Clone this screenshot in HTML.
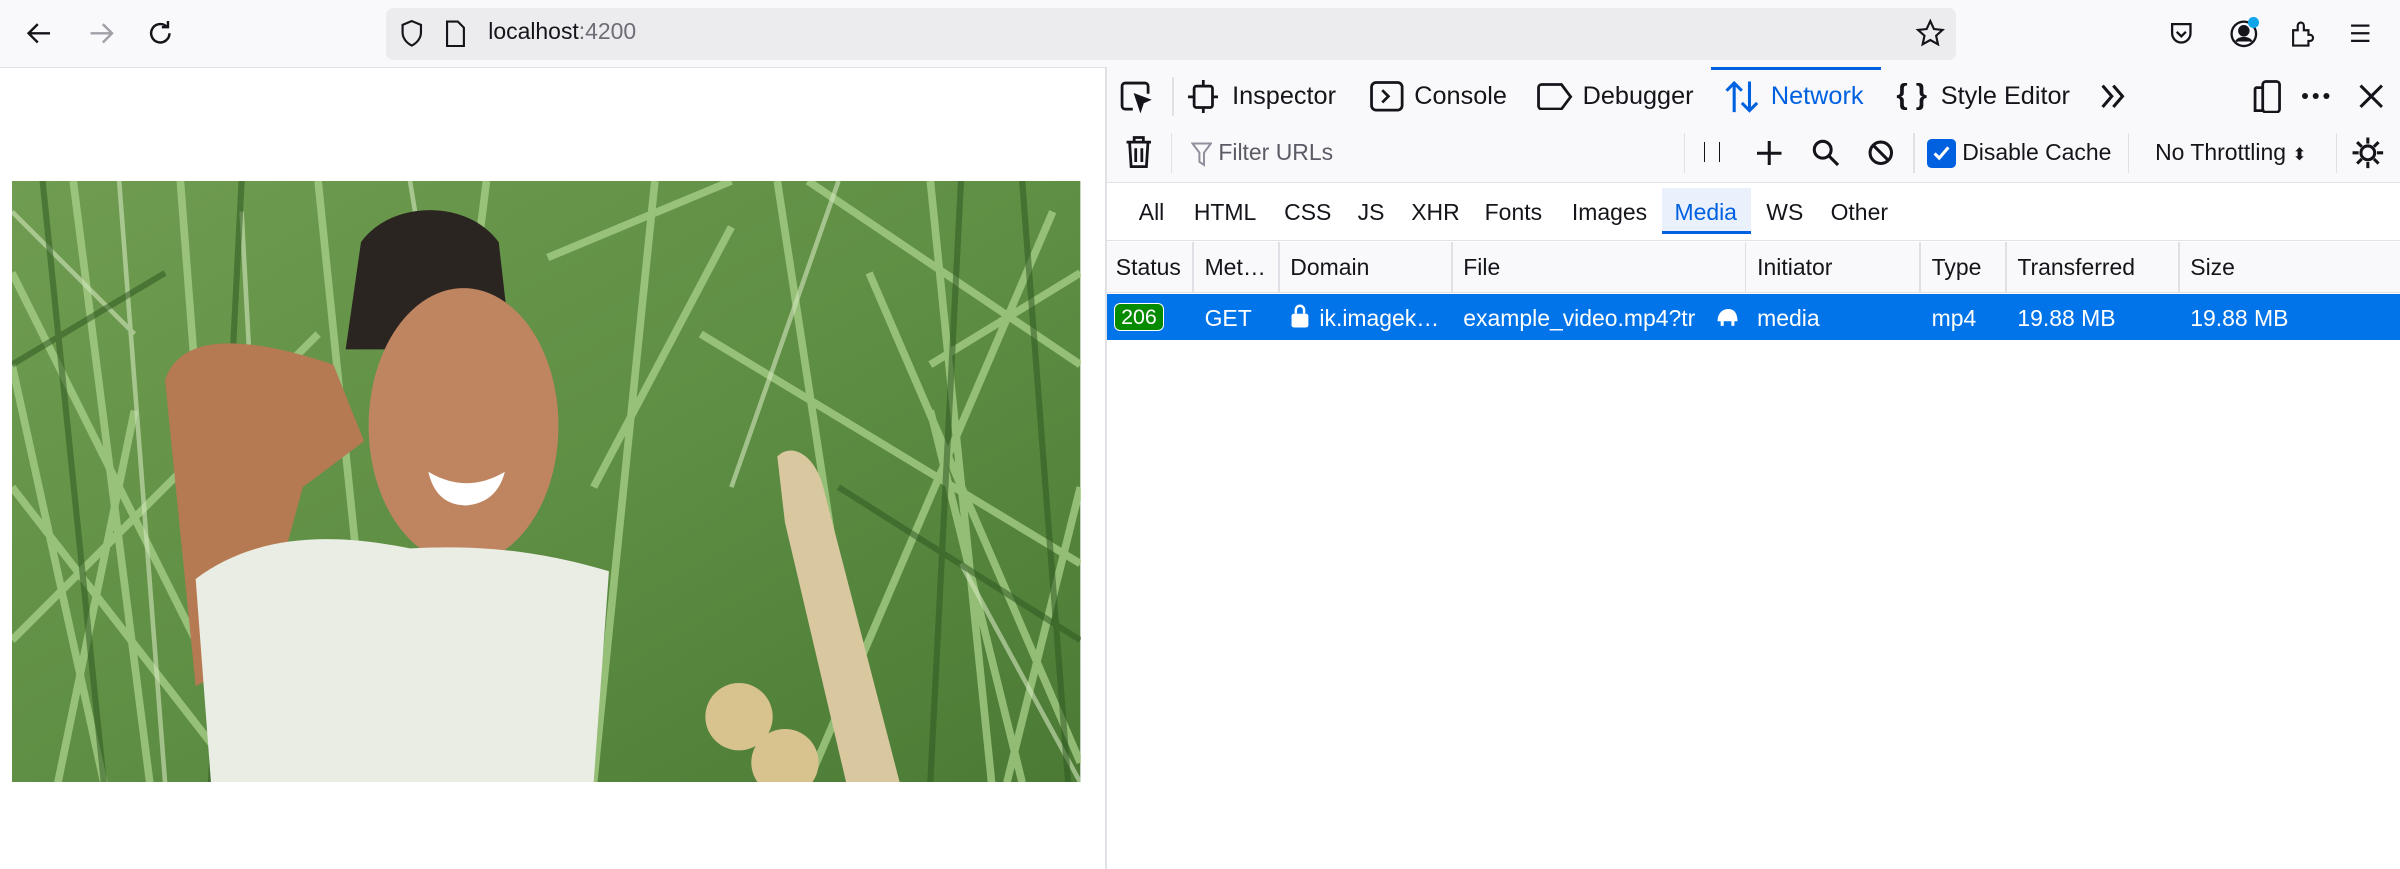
<!DOCTYPE html>
<html><head><meta charset="utf-8"><style>
html,body{margin:0;padding:0;background:#fff;overflow:hidden}
#w{zoom:1.5306;width:1568px;height:568px;position:relative;font-family:"Liberation Sans",sans-serif;color:#15141a}
.a{position:absolute}
svg{display:block}
.t{font-size:16.5px;position:absolute;top:0;height:38px;line-height:38px;white-space:nowrap}
</style></head><body><div id="w">
<div class="a" style="left:0;top:0;width:1568px;height:44px;background:#f9f9fb;border-bottom:1px solid #e0e0e6"></div>
<svg class="a" style="left:16px;top:12px" width="20" height="20" viewBox="0 0 20 20" fill="none" stroke="#15141a" stroke-width="1.6"><path d="M17 10H3M9 4L3 10l6 6"/></svg>
<svg class="a" style="left:56px;top:12px" width="20" height="20" viewBox="0 0 20 20" fill="none" stroke="#a0a0a8" stroke-width="1.6"><path d="M3 10h14M11 4l6 6-6 6"/></svg>
<svg class="a" style="left:95px;top:12px" width="20" height="20" viewBox="0 0 20 20" fill="none" stroke="#15141a" stroke-width="1.6"><path d="M16 10a6 6 0 1 1-2-4.5M15 2v4h-4"/></svg>
<div class="a" style="left:252px;top:5px;width:1026px;height:34px;background:#ececef;border-radius:5px"></div>
<svg class="a" style="left:260px;top:12px" width="18" height="20" viewBox="0 0 18 20" fill="none" stroke="#15141a" stroke-width="1.4"><path d="M9 2l6 2.5v5c0 4-3 7-6 8.5C6 16.5 3 13.5 3 9.5v-5z"/></svg>
<svg class="a" style="left:290px;top:13px" width="14" height="18" viewBox="0 0 14 18" fill="none" stroke="#15141a" stroke-width="1.4"><path d="M2 1h7l4 4v12H2z"/></svg>
<div class="a" style="left:319px;top:12px;font-size:15px">localhost<span style="color:#6d6d75">:4200</span></div>
<svg class="a" style="left:1251px;top:12px" width="20" height="20" viewBox="0 0 20 20" fill="none" stroke="#15141a" stroke-width="1.4"><path d="M10 2l2.4 5.2 5.6.6-4.2 3.8 1.2 5.6L10 14.4 5 17.2l1.2-5.6L2 7.8l5.6-.6z"/></svg>
<svg class="a" style="left:1415px;top:12px" width="20" height="20" viewBox="0 0 20 20" fill="none" stroke="#15141a" stroke-width="1.5"><path d="M4 4h12v6a6 6 0 0 1-12 0z M7 9l3 3 3-3"/></svg>
<svg class="a" style="left:1455px;top:11px" width="22" height="22" viewBox="0 0 22 22" fill="none" stroke="#15141a" stroke-width="1.5"><circle cx="11" cy="11" r="8"/><circle cx="11" cy="9" r="3" fill="#15141a"/><path d="M6 16c2-3 8-3 10 0" fill="#15141a"/></svg>
<div class="a" style="left:1469px;top:11px;width:7px;height:7px;border-radius:50%;background:#0ea5e9"></div>
<svg class="a" style="left:1494px;top:12px" width="20" height="20" viewBox="0 0 20 20" fill="none" stroke="#15141a" stroke-width="1.4"><path d="M4 18V8h3V5a2 2 0 0 1 4 0v3h3v3h1a2 2 0 0 1 0 4h-1v3z"/></svg>
<svg class="a" style="left:1534px;top:14px" width="16" height="16" viewBox="0 0 16 16" stroke="#15141a" stroke-width="1.5"><path d="M2 3h12M2 8h12M2 13h12"/></svg>

<svg class="a" style="left:8px;top:118px" width="698" height="393" viewBox="0 0 698 393">
<defs><linearGradient id="g" x1="0" y1="0" x2="1" y2="1"><stop offset="0" stop-color="#6f9c50"/><stop offset=".5" stop-color="#5f8f44"/><stop offset="1" stop-color="#4b7a35"/></linearGradient></defs>
<rect width="698" height="393" fill="url(#g)"/>
<g stroke="#a9d08a" stroke-width="5" opacity=".75" fill="none">
<path d="M0 60L120 300M40 0L90 393M200 0L240 393M310 0L260 393M420 0L380 393M500 0L560 393M600 0L640 393M680 20L520 393M0 300L200 100M450 100L698 250M520 0L698 120M0 200L150 393M650 393L698 200M350 50L470 0M560 60L698 380M110 0L140 393M30 393L80 150M380 200L470 30M600 120L698 60M0 120L60 393M660 393L600 150M230 393L180 250"/></g>
<g stroke="#d2e6bd" stroke-width="3" opacity=".6" fill="none"><path d="M70 0L100 393M260 0L290 180M540 0L470 200M620 250L698 393M0 20L80 100M150 20L170 393"/></g>
<g stroke="#2f5a22" stroke-width="4" opacity=".55" fill="none"><path d="M20 0L60 393M150 0L130 393M620 0L600 393M660 0L690 393M540 200L698 300M0 120L100 60"/></g>
<path d="M100 130c10-30 50-30 110-10l20 50-40 30-30 110-40 20z" fill="#b57a52"/>
<path d="M228 40c20-28 70-28 90 0l8 70-108 0z" fill="#2b2522"/>
<ellipse cx="295" cy="160" rx="62" ry="90" fill="#bf8560"/>
<path d="M272 190q25 15 50 0q-5 20-25 22q-20 0-25-22z" fill="#fff"/>
<path d="M120 260c40-30 90-30 140-20c40-2 80 0 130 15l-10 138H130z" fill="#eaede4"/>
<path d="M500 180c10-10 25 0 30 20l50 193h-35l-40-170z" fill="#d9c7a0"/>
<circle cx="475" cy="350" r="22" fill="#d8c28e"/><circle cx="505" cy="380" r="22" fill="#d8c28e"/>
</svg>

<div class="a" style="left:722px;top:44px;width:1px;height:524px;background:#e0e0e6"></div>
<div class="a" style="left:723px;top:44px;width:845px;height:38px;background:#f9f9fb;border-bottom:1px solid #e0e0e6"></div>
<div class="a" style="left:1118px;top:44px;width:111px;height:2px;background:#0061e0"></div>
<svg class="a" style="left:731px;top:52px" width="22" height="22" viewBox="0 0 22 22" fill="none" stroke="#15141a" stroke-width="1.8"><path d="M9 19H4a2 2 0 0 1-2-2V4a2 2 0 0 1 2-2h13a2 2 0 0 1 2 2v5"/><path d="M11 10l8 3-3.5 1.5L14 19z" fill="#15141a"/></svg>
<div class="a" style="left:766px;top:50px;width:1px;height:26px;background:#e0e0e6"></div>
<svg class="a" style="left:776px;top:52px" width="20" height="22" viewBox="0 0 20 22" fill="none" stroke="#15141a" stroke-width="1.8"><rect x="4" y="4" width="12" height="14" rx="1.5"/><path d="M10 0v4M10 18v4M0 11h4M16 11h4"/></svg>
<div class="t" style="left:805px;top:44px">Inspector</div>
<svg class="a" style="left:895px;top:53px" width="22" height="20" viewBox="0 0 22 20" fill="none" stroke="#15141a" stroke-width="1.8"><rect x="1" y="1" width="20" height="18" rx="3"/><path d="M8 6l4 4-4 4"/></svg>
<div class="t" style="left:924px;top:44px">Console</div>
<svg class="a" style="left:1004px;top:54px" width="24" height="18" viewBox="0 0 24 18" fill="none" stroke="#15141a" stroke-width="1.8"><path d="M3 1h13l6 8-6 8H3a2 2 0 0 1-2-2V3a2 2 0 0 1 2-2z"/></svg>
<div class="t" style="left:1034px;top:44px">Debugger</div>
<svg class="a" style="left:1127px;top:52px" width="22" height="22" viewBox="0 0 22 22" fill="none" stroke="#0061e0" stroke-width="2"><path d="M6 21V2M1 7l5-5 5 5M16 1v19M11 15l5 5 5-5"/></svg>
<div class="t" style="left:1157px;top:44px;color:#0061e0">Network</div>
<div class="t" style="left:1239px;top:43px;font-size:19px;font-weight:bold">{ }</div>
<div class="t" style="left:1268px;top:44px">Style Editor</div>
<svg class="a" style="left:1371px;top:53px" width="20" height="20" viewBox="0 0 20 20" fill="none" stroke="#15141a" stroke-width="2"><path d="M3 3l6 7-6 7M10 3l6 7-6 7"/></svg>
<svg class="a" style="left:1471px;top:52px" width="20" height="22" viewBox="0 0 20 22" fill="none" stroke="#15141a" stroke-width="1.8"><rect x="7" y="1" width="11" height="20" rx="2"/><path d="M7 5H3a1 1 0 0 0-1 1v14h6"/></svg>
<div class="a" style="left:1504px;top:61px;width:4px;height:4px;border-radius:50%;background:#15141a;box-shadow:7px 0 #15141a,14px 0 #15141a"></div>
<svg class="a" style="left:1541px;top:55px" width="16" height="16" viewBox="0 0 16 16" stroke="#15141a" stroke-width="2"><path d="M1 1l14 14M15 1L1 15"/></svg>

<div class="a" style="left:723px;top:82px;width:845px;height:37px;background:#f9f9fb;border-bottom:1px solid #e0e0e6"></div>
<svg class="a" style="left:735px;top:89px" width="18" height="22" viewBox="0 0 18 22" fill="none" stroke="#15141a" stroke-width="1.8"><path d="M1 4h16M6 4V1h6v3M3 4l1 16h10l1-16M7 8v9M11 8v9"/></svg>
<div class="a" style="left:765px;top:87px;width:1px;height:26px;background:#e0e0e6"></div>
<svg class="a" style="left:778px;top:93px" width="14" height="16" viewBox="0 0 14 16" fill="none" stroke="#8f8f9d" stroke-width="1.3"><path d="M1 1h12L8.5 7v8L5.5 13V7z"/></svg>
<div class="a" style="left:796px;top:91px;font-size:15px;color:#5b5b66">Filter URLs</div>
<div class="a" style="left:1100px;top:87px;width:1px;height:26px;background:#e0e0e6"></div>
<div class="a" style="left:1113px;top:93px;width:1px;height:13px;background:#15141a"></div>
<div class="a" style="left:1123px;top:93px;width:1px;height:13px;background:#15141a"></div>
<svg class="a" style="left:1148px;top:92px" width="16" height="16" viewBox="0 0 16 16" stroke="#15141a" stroke-width="2"><path d="M8 0v16M0 8h16"/></svg>
<svg class="a" style="left:1184px;top:91px" width="18" height="18" viewBox="0 0 18 18" fill="none" stroke="#15141a" stroke-width="2"><circle cx="7" cy="7" r="5.5"/><path d="M11 11l6 6"/></svg>
<svg class="a" style="left:1220px;top:91px" width="18" height="18" viewBox="0 0 18 18" fill="none" stroke="#15141a" stroke-width="2"><circle cx="9" cy="9" r="7"/><path d="M4 4l10 10"/></svg>
<div class="a" style="left:1250px;top:87px;width:1px;height:26px;background:#e0e0e6"></div>
<div class="a" style="left:1259px;top:91px;width:19px;height:19px;border-radius:3px;background:#0061e0"></div>
<svg class="a" style="left:1261px;top:93px" width="15" height="15" viewBox="0 0 15 15" fill="none" stroke="#fff" stroke-width="2"><path d="M3 7.5l3 3 6-7"/></svg>
<div class="a" style="left:1282px;top:91px;font-size:15px">Disable Cache</div>
<div class="a" style="left:1390px;top:87px;width:1px;height:26px;background:#e0e0e6"></div>
<div class="a" style="left:1408px;top:91px;font-size:15px">No Throttling <span style="font-size:11px">⬍</span></div>
<div class="a" style="left:1526px;top:87px;width:1px;height:26px;background:#e0e0e6"></div>
<svg class="a" style="left:1536px;top:89px" width="22" height="22" viewBox="0 0 22 22" fill="none" stroke="#15141a" stroke-width="2"><circle cx="11" cy="11" r="4.5"/><path d="M11 1v4M11 17v4M1 11h4M17 11h4M4 4l3 3M15 15l3 3M4 18l3-3M15 7l3-3"/></svg>

<div class="a" style="left:723px;top:120px;width:845px;height:37px;background:#fff;border-bottom:1px solid #e0e0e6"></div>
<div class="a" style="left:1086px;top:123px;width:58px;height:28px;background:#eaf1fd;border-bottom:2px solid #0061e0"></div>
<div class="a" style="top:130px;left:744px;font-size:15px">All</div>
<div class="a" style="top:130px;left:780px;font-size:15px">HTML</div>
<div class="a" style="top:130px;left:839px;font-size:15px">CSS</div>
<div class="a" style="top:130px;left:887px;font-size:15px">JS</div>
<div class="a" style="top:130px;left:922px;font-size:15px">XHR</div>
<div class="a" style="top:130px;left:970px;font-size:15px">Fonts</div>
<div class="a" style="top:130px;left:1027px;font-size:15px">Images</div>
<div class="a" style="top:130px;left:1094px;font-size:15px;color:#0061e0">Media</div>
<div class="a" style="top:130px;left:1154px;font-size:15px">WS</div>
<div class="a" style="top:130px;left:1196px;font-size:15px">Other</div>

<div class="a" style="left:723px;top:158px;width:845px;height:33px;background:#f9f9fb;border-bottom:1px solid #e0e0e6"></div>
<div class="a" style="top:166px;left:729px;font-size:15px">Status</div>
<div class="a" style="top:166px;left:787px;font-size:15px">Met…</div>
<div class="a" style="top:166px;left:843px;font-size:15px">Domain</div>
<div class="a" style="top:166px;left:956px;font-size:15px">File</div>
<div class="a" style="top:166px;left:1148px;font-size:15px">Initiator</div>
<div class="a" style="top:166px;left:1262px;font-size:15px">Type</div>
<div class="a" style="top:166px;left:1318px;font-size:15px">Transferred</div>
<div class="a" style="top:166px;left:1431px;font-size:15px">Size</div>
<div class="a" style="left:779px;top:158px;width:1px;height:33px;background:#e0e0e6"></div>
<div class="a" style="left:835px;top:158px;width:1px;height:33px;background:#e0e0e6"></div>
<div class="a" style="left:948px;top:158px;width:1px;height:33px;background:#e0e0e6"></div>
<div class="a" style="left:1140px;top:158px;width:1px;height:33px;background:#e0e0e6"></div>
<div class="a" style="left:1254px;top:158px;width:1px;height:33px;background:#e0e0e6"></div>
<div class="a" style="left:1310px;top:158px;width:1px;height:33px;background:#e0e0e6"></div>
<div class="a" style="left:1423px;top:158px;width:1px;height:33px;background:#e0e0e6"></div>

<div class="a" style="left:723px;top:192px;width:845px;height:30px;background:#0074e8"></div>
<div class="a" style="left:728px;top:198px;width:31px;height:17px;border-radius:4px;background:#058b00;border:1px solid #fff;color:#fff;font-size:14px;line-height:17px;text-align:center">206</div>
<div class="a" style="top:199px;left:787px;font-size:15px;color:#fff">GET</div>
<svg class="a" style="left:843px;top:198px" width="13" height="16" viewBox="0 0 13 16" fill="#fff"><path d="M3 7V4.5a3.5 3.5 0 0 1 7 0V7h-1.6V4.5a1.9 1.9 0 0 0-3.8 0V7z"/><rect x="1" y="7" width="11" height="9" rx="1.5"/></svg>
<div class="a" style="top:199px;left:862px;font-size:15px;color:#fff">ik.imagek…</div>
<div class="a" style="top:199px;left:956px;font-size:15px;color:#fff;width:158px;overflow:hidden;white-space:nowrap">example_video.mp4?tr</div>
<svg class="a" style="left:1119px;top:200px" width="18" height="14" viewBox="0 0 18 14" fill="#fff"><path d="M3 10c0-5 3-8 7-8s6 3 6 8H14v3h-2v-3H7v3H5v-3z"/></svg>
<div class="a" style="top:199px;left:1148px;font-size:15px;color:#fff">media</div>
<div class="a" style="top:199px;left:1262px;font-size:15px;color:#fff">mp4</div>
<div class="a" style="top:199px;left:1318px;font-size:15px;color:#fff">19.88 MB</div>
<div class="a" style="top:199px;left:1431px;font-size:15px;color:#fff">19.88 MB</div>
</div></body></html>
